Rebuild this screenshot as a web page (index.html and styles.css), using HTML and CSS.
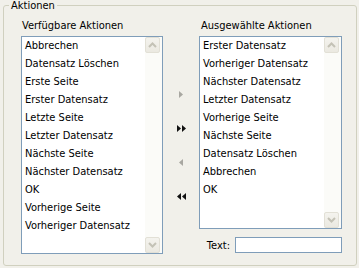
FILE: index.html
```html
<!DOCTYPE html>
<html lang="de">
<head>
<meta charset="utf-8">
<title>Aktionen</title>
<link rel="stylesheet" href="styles.css">
</head>
<body>
<fieldset class="group">
  <legend class="group-title">Aktionen</legend>
  <div class="layout">
    <div class="label label-left">Verfügbare Aktionen</div>
    <div class="label label-right">Ausgewählte Aktionen</div>

    <div class="listbox listbox-tall">
      <ul class="items">
        <li>Abbrechen</li>
        <li>Datensatz Löschen</li>
        <li>Erste Seite</li>
        <li>Erster Datensatz</li>
        <li>Letzte Seite</li>
        <li>Letzter Datensatz</li>
        <li>Nächste Seite</li>
        <li>Nächster Datensatz</li>
        <li>OK</li>
        <li>Vorherige Seite</li>
        <li>Vorheriger Datensatz</li>
      </ul>
      <div class="scrollbar">
        <div class="sb-btn"><svg width="9" height="6" viewBox="0 0 9 6"><polyline points="1,5 4.5,1.5 8,5" fill="none" stroke="#c4c2b6" stroke-width="2"/></svg></div>
        <div class="sb-track"></div>
        <div class="sb-btn"><svg width="9" height="6" viewBox="0 0 9 6"><polyline points="1,1 4.5,4.5 8,1" fill="none" stroke="#c4c2b6" stroke-width="2"/></svg></div>
      </div>
    </div>

    <div class="mover">
      <button class="move-btn" type="button" disabled><svg width="4" height="7" viewBox="0 0 4 7"><polygon points="0,0 4,3.5 0,7" fill="#a8a7a1"/></svg></button>
      <button class="move-btn" type="button"><svg width="9" height="7" viewBox="0 0 9 7"><polygon points="0,0 4,3.5 0,7" fill="#111"/><polygon points="5,0 9,3.5 5,7" fill="#111"/></svg></button>
      <button class="move-btn" type="button" disabled><svg width="4" height="7" viewBox="0 0 4 7"><polygon points="4,0 0,3.5 4,7" fill="#a8a7a1"/></svg></button>
      <button class="move-btn" type="button"><svg width="9" height="7" viewBox="0 0 9 7"><polygon points="4,0 0,3.5 4,7" fill="#111"/><polygon points="9,0 5,3.5 9,7" fill="#111"/></svg></button>
    </div>

    <div class="right-stack">
      <div class="listbox listbox-short">
        <ul class="items">
          <li>Erster Datensatz</li>
          <li>Vorheriger Datensatz</li>
          <li>Nächster Datensatz</li>
          <li>Letzter Datensatz</li>
          <li>Vorherige Seite</li>
          <li>Nächste Seite</li>
          <li>Datensatz Löschen</li>
          <li>Abbrechen</li>
          <li>OK</li>
        </ul>
        <div class="scrollbar">
          <div class="sb-btn"><svg width="9" height="6" viewBox="0 0 9 6"><polyline points="1,5 4.5,1.5 8,5" fill="none" stroke="#c4c2b6" stroke-width="2"/></svg></div>
          <div class="sb-track"></div>
          <div class="sb-btn"><svg width="9" height="6" viewBox="0 0 9 6"><polyline points="1,1 4.5,4.5 8,1" fill="none" stroke="#c4c2b6" stroke-width="2"/></svg></div>
        </div>
      </div>
      <div class="text-row">
        <label class="text-label" for="txt">Text:</label>
        <input class="text-input" id="txt" type="text">
      </div>
    </div>
  </div>
</fieldset>
</body>
</html>
```
FILE: styles.css
```css
html, body {
  margin: 0;
  padding: 0;
  background: #f1f0ea;
  font-family: "DejaVu Sans Condensed", "DejaVu Sans", sans-serif;
  font-stretch: condensed;
  font-size: 11px;
  color: #000;
  height: 268px;
  overflow: hidden;
}

.group {
  margin: 0 2px 0 3px;
  border: 1px solid #d0d0bf;
  border-radius: 3px;
  padding: 0 14px 11px 5px;
  min-width: 0;
}

.group-title {
  padding: 0 2px;
  line-height: 11px;
  font-size: 11px;
}

.layout {
  display: grid;
  grid-template-columns: 142px 36px 143px;
  grid-template-rows: auto auto;
  margin-left: 12px;
  margin-top: 8px;
}

.label {
  line-height: 13px;
  height: 13px;
  margin-bottom: 4px;
}

.label-left {
  grid-column: 1;
  grid-row: 1;
  padding-left: 1px;
}

.label-right {
  grid-column: 3;
  grid-row: 1;
  padding-left: 2px;
}

.listbox {
  display: flex;
  border: 1px solid #7f9db9;
  background: #fff;
  box-sizing: border-box;
}

.listbox-tall {
  grid-column: 1;
  grid-row: 2;
  height: 218px;
}

.listbox-short {
  height: 193px;
}

.items {
  list-style: none;
  margin: 0;
  padding: 0;
  flex: 1;
  overflow: hidden;
}

.items li {
  height: 18px;
  line-height: 18px;
  padding-left: 3px;
  white-space: nowrap;
}

.scrollbar {
  width: 16px;
  display: flex;
  flex-direction: column;
  background: #fbfbf8;
  padding-right: 1px;
}

.sb-btn {
  width: 15px;
  height: 16px;
  box-sizing: border-box;
  border: 1px solid #e2e0d6;
  border-radius: 2px;
  background: linear-gradient(#f4f3ee, #ebe9e1);
  display: flex;
  align-items: center;
  justify-content: center;
}

.sb-track {
  flex: 1;
}

.mover {
  grid-column: 2;
  grid-row: 2;
  align-self: center;
  display: flex;
  flex-direction: column;
  gap: 10px;
  margin-top: 1px;
}

.move-btn {
  height: 24px;
  border: none;
  background: transparent;
  padding: 0;
  margin: 0;
  display: flex;
  align-items: center;
  justify-content: center;
}

.right-stack {
  grid-column: 3;
  grid-row: 2;
  display: flex;
  flex-direction: column;
}

.text-row {
  display: flex;
  align-items: center;
  justify-content: flex-end;
  gap: 5px;
  margin-top: 8px;
}

.text-label {
  line-height: 13px;
}

.text-input {
  width: 107px;
  height: 16px;
  box-sizing: border-box;
  border: 1px solid #7f9db9;
  background: #fff;
  margin: 0;
  padding: 0 2px;
  font: inherit;
  outline: none;
}
```
